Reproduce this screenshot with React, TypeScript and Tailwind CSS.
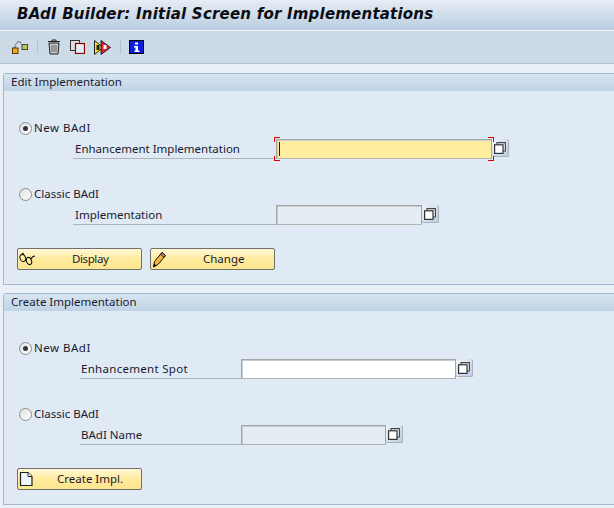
import type { ReactNode } from "react";

const font = { fontFamily: '"Noto Sans", sans-serif' };

function Copy() {
  return (
    <svg width="12" height="12" viewBox="0 0 12 12">
      <path d="M3 3V.6h8.400V9H9" fill="#e8eef5" stroke="#444" strokeWidth="1.100" />
      <rect x=".6" y="2.800" width="8.400" height="8.600" fill="#fff" stroke="#333" strokeWidth="1.200" />
    </svg>
  );
}

function Field({ label, left, labelW, inputW, disabled, required, marker, tr = "" }: { label: string; left: string; labelW: string; inputW: string; disabled?: boolean; required?: boolean; marker?: boolean; tr?: string }) {
  return (
    <div className={`flex items-start ${left}`}>
      <div className={`${labelW} h-[20px] border-b border-[#b0b5ba] text-[11.5px] leading-[20px] text-[#1a1a2e] whitespace-nowrap ${tr}`}>{label}</div>
      <div className={`relative h-[20px] box-border border border-[#a6a6a6] border-b-[#b4b4b4] shadow-[inset_1px_1px_0_#c6ccd2] ${inputW} ${required ? "bg-[#ffee9f]" : disabled ? "bg-[#e4ecf4]" : "bg-white"}`}>
        {marker && (
          <>
            <span className="absolute left-[-3px] top-[-3px] w-[6px] h-[5px] border-l border-t border-[#e00000]" />
            <span className="absolute left-[-3px] bottom-[-3px] w-[6px] h-[5px] border-l border-b border-[#e00000]" />
            <span className="absolute right-[-3px] top-[-3px] w-[6px] h-[5px] border-r border-t border-[#e00000]" />
            <span className="absolute right-[-3px] bottom-[-3px] w-[6px] h-[5px] border-r border-b border-[#e00000]" />
            <span className="absolute left-[2px] top-[2px] w-px h-[14px] bg-[#10184a]" />
          </>
        )}
      </div>
      <div className="w-[17px] h-[18px] flex items-center justify-center bg-gradient-to-br from-[#f0f4f9] to-[#bccde2] border-r border-b border-[#a9b1bb] rounded-[2px]">
        <Copy />
      </div>
    </div>
  );
}

function Radio({ label, on, tr = "" }: { label: string; on?: boolean; tr?: string }) {
  return (
    <div className={`flex items-center h-[14px] ml-[15px] text-[11.5px] text-[#1a1a2e] ${tr}`}>
      <span className="w-[13px] h-[13px] rounded-full border border-[#8d8d8d] bg-gradient-to-br from-[#e0e0e0] to-white flex items-center justify-center mr-[2px]">
        {on && <span className="w-[5px] h-[5px] rounded-full bg-[#333344]" />}
      </span>
      {label}
    </div>
  );
}

function Btn({ label, children, textLeft, tr = "" }: { label: string; children: ReactNode; textLeft: string; tr?: string }) {
  return (
    <div className={`relative w-[125px] h-[22px] border border-[#6f6f6f] rounded-[2px] bg-gradient-to-b from-[#fff8d6] via-[#ffeb9e] to-[#fde58f] text-[11.5px] leading-[20px] text-[#1a1a2e] ${tr}`}>
      <span className="absolute left-[1px] top-[2px]">{children}</span>
      <span className={`absolute top-0 ${textLeft}`}>{label}</span>
    </div>
  );
}

function Panel({ title, children }: { title: string; children: ReactNode }) {
  return (
    <section className="ml-[3px] h-[212px] border border-[#a3b8cf] border-r-0 bg-[#dfeaf4] rounded-tl-[3px]">
      <div className="h-[17px] pl-[7px] text-[11.5px] leading-[15px] text-[#1a1a2e] bg-gradient-to-b from-[#d8e5f1] to-[#bfd3e6]">{title}</div>
      <div className="pt-[30px]">{children}</div>
    </section>
  );
}

const Glasses = (
  <svg width="18" height="16" viewBox="0 0 18 16" fill="none" stroke="#111" strokeWidth="1.100">
    <ellipse cx="3.800" cy="7" rx="2.700" ry="3.700" transform="rotate(-25 3.800 7)" />
    <ellipse cx="10" cy="10" rx="2.500" ry="3.700" transform="rotate(-20 10 10)" />
    <path d="M6.200 8.500l1.500 .5M2.500 3.500L4.500 2M12 8c1-2 2-3 4-3" />
  </svg>
);

const Pencil = (
  <svg width="16" height="17" viewBox="0 0 16 17">
    <path d="M1.500 16l1-5.500L10 1.500l3.500 3L6 13.500z" fill="#f2b83e" stroke="#111" strokeLinejoin="round" />
    <path d="M10 1.500l3.500 3-1.500 1.800-3.500-3z" fill="#d98aa0" stroke="#111" />
    <path d="M1.500 16l.7-3.400 2.300 1.800z" fill="#111" />
  </svg>
);

const Doc = (
  <svg width="14" height="16" viewBox="0 0 14 16">
    <path d="M1.500 1.500H9L13 5.500V14.500H1.500z" fill="#eef7fd" stroke="#222" strokeWidth="1.200" />
    <path d="M9 1.500v4h4" fill="#fff" stroke="#222" />
  </svg>
);

export default function App() {
  return (
    <div className="w-[614px] h-[508px] overflow-hidden bg-[#e9f0f6]" style={font}>
      <header className="h-[31px] bg-gradient-to-b from-[#e6edf4] to-[#b9cde0] border-b border-[#f4f7fa] pl-[17px] text-[15px] leading-[29px] font-bold italic tracking-[0.21px] text-[#0c0c14] whitespace-nowrap" style={{ fontFamily: '"DejaVu Sans", sans-serif' }}>
        BAdI Builder: Initial Screen for Implementations
      </header>
      <div className="h-[33px] bg-[#cddbe7] border-b border-[#b3c3d3] flex items-center pl-[12px]">
        <svg width="16" height="16" viewBox="0 0 16 16">
          <path d="M3 9V6.500L6 2.500l2 .5 2 2.500" fill="none" stroke="#333" strokeWidth="1" strokeDasharray="2 1" />
          <rect x=".5" y="9" width="5.500" height="5.500" fill="#f5a623" stroke="#5a3a00" />
          <rect x="10" y="5.500" width="5.500" height="5" fill="#b8c850" stroke="#444" />
        </svg>
        <span className="w-px h-[14px] bg-[#b0c4d8] ml-[9px] mr-[9px]" />
        <svg width="14" height="16" viewBox="0 0 14 16">
          <path d="M1 2.500h12M5 2.500V1h4v1.500" stroke="#222" fill="none" />
          <path d="M2 4h10l-1 11H3z" fill="#c8c8c8" stroke="#222" />
          <path d="M5 6v7M7 6v7M9 6v7" stroke="#666" />
        </svg>
        <svg className="ml-[9px]" width="15" height="14" viewBox="0 0 15 14">
          <rect x=".5" y=".5" width="9" height="10" fill="#ddd" stroke="#333" />
          <rect x="5.500" y="3.500" width="9" height="10" fill="#e3eef8" stroke="#8b0000" strokeWidth="1.200" />
        </svg>
        <svg className="ml-[9px]" width="17" height="15" viewBox="0 0 17 15">
          <path d="M.5 .5L9 7.500.5 14.500z" fill="#f6e415" stroke="#222" />
          <path d="M7 .5L16.500 7.500 7 14.500z" fill="#e02030" stroke="#222" />
          <path d="M2.500 5h3v5h-3z" fill="#222" />
          <path d="M9.500 5h3v4h-3z" fill="#fff" />
        </svg>
        <span className="w-px h-[14px] bg-[#b0c4d8] ml-[9px] mr-[8px]" />
        <svg width="15" height="14" viewBox="0 0 15 14">
          <rect width="15" height="14" fill="#000" />
          <rect x="1" y="1" width="13" height="12" fill="#0a1fd8" />
          <rect x="6" y="2.500" width="3" height="2" fill="#fff" />
          <path d="M5 6h4v4.500h1.500V12h-5v-1.500H6.500V7.500H5z" fill="#fff" />
        </svg>
      </div>
      <div className="flex flex-col gap-[8px] mt-[9px]">
        <Panel title="Edit Implementation">
          <Radio label="New BAdI" on tr="tracking-[0.5px]" />
          <div className="mt-[4px]">
            <Field label="Enhancement Implementation" left="ml-[69px]" labelW="w-[203px] pl-[2px]" inputW="w-[216px]" required marker />
          </div>
          <div className="mt-[28px]"><Radio label="Classic BAdI" /></div>
          <div className="mt-[4px]">
            <Field label="Implementation" left="ml-[69px]" labelW="w-[203px] pl-[2px]" inputW="w-[146px]" disabled />
          </div>
          <div className="flex gap-[8px] ml-[13px] mt-[23px]">
            <Btn label="Display" textLeft="left-[54px]" tr="tracking-[-0.4px]">{Glasses}</Btn>
            <Btn label="Change" textLeft="left-[52px]">{Pencil}</Btn>
          </div>
        </Panel>
        <Panel title="Create Implementation">
          <Radio label="New BAdI" on tr="tracking-[0.5px]" />
          <div className="mt-[4px]">
            <Field label="Enhancement Spot" left="ml-[76px]" labelW="w-[161px] pl-[1px]" inputW="w-[215px]" tr="tracking-[0.3px]" />
          </div>
          <div className="mt-[28px]"><Radio label="Classic BAdI" /></div>
          <div className="mt-[4px]">
            <Field label="BAdI Name" left="ml-[76px]" labelW="w-[161px] pl-[1px]" inputW="w-[145px]" disabled />
          </div>
          <div className="flex gap-[8px] ml-[13px] mt-[23px]">
            <Btn label="Create Impl." textLeft="left-[39px]">{Doc}</Btn>
          </div>
        </Panel>
      </div>
    </div>
  );
}
